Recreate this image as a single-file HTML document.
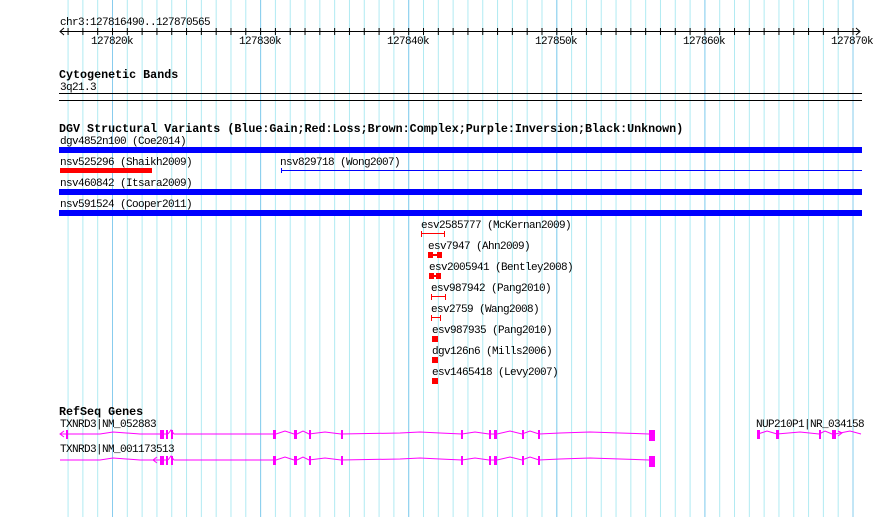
<!DOCTYPE html>
<html><head><meta charset="utf-8"><style>
html,body{margin:0;padding:0;background:#fff;width:890px;height:517px;overflow:hidden}
svg{display:block}
text{font-family:"Liberation Mono",monospace;font-size:11px;letter-spacing:-0.6px;fill:#000}
.b{font-weight:bold;font-size:11.7px;letter-spacing:0}
</style></head><body>
<svg width="890" height="517" viewBox="0 0 890 517" xmlns="http://www.w3.org/2000/svg">
<defs>
<pattern id="g" x="52.76" y="0" width="14.81" height="517" patternUnits="userSpaceOnUse"><rect x="0" y="0" width="1" height="517" fill="#b0eaf2"/></pattern>
<pattern id="G" x="112" y="0" width="148.1" height="517" patternUnits="userSpaceOnUse"><rect x="0" y="0" width="1" height="517" fill="#88ccee"/></pattern>
<pattern id="t" x="52.76" y="0" width="14.81" height="517" patternUnits="userSpaceOnUse"><rect x="0" y="0" width="1" height="517" fill="#000"/></pattern>
</defs>
<rect x="66" y="0" width="788" height="517" fill="url(#g)"/>
<rect x="66" y="0" width="788" height="517" fill="url(#G)"/>
<!-- ruler -->
<text x="60" y="25">chr3:127816490..127870565</text>
<rect x="60" y="31" width="800" height="1" fill="#000"/>
<rect x="66" y="28" width="788" height="7" fill="url(#t)"/>
<path d="M64 28 L60 31.5 L64 35 M856 28 L860 31.5 L856 35" stroke="#000" fill="none" stroke-width="1"/>
<text x="91" y="44">127820k</text>
<text x="239" y="44">127830k</text>
<text x="387" y="44">127840k</text>
<text x="535" y="44">127850k</text>
<text x="683" y="44">127860k</text>
<text x="831" y="44">127870k</text>
<!-- cyto -->
<text class="b" x="59" y="78">Cytogenetic Bands</text>
<text x="60" y="90">3q21.3</text>
<rect x="59" y="93" width="803" height="1" fill="#000"/>
<rect x="59" y="100" width="803" height="1" fill="#000"/>
<!-- DGV -->
<text class="b" x="59" y="132">DGV Structural Variants (Blue:Gain;Red:Loss;Brown:Complex;Purple:Inversion;Black:Unknown)</text>
<text x="60" y="144">dgv4852n100 (Coe2014)</text>
<rect x="59" y="147" width="803" height="6" fill="#0000ff"/>
<text x="60" y="165">nsv525296 (Shaikh2009)</text>
<rect x="60" y="168" width="92" height="5" fill="#ff0000"/>
<text x="280" y="165">nsv829718 (Wong2007)</text>
<rect x="281" y="170" width="581" height="1" fill="#0000ff"/>
<rect x="281" y="168" width="1" height="5" fill="#0000ff"/>
<text x="60" y="186">nsv460842 (Itsara2009)</text>
<rect x="59" y="189" width="803" height="6" fill="#0000ff"/>
<text x="60" y="207">nsv591524 (Cooper2011)</text>
<rect x="59" y="210" width="803" height="6" fill="#0000ff"/>
<text x="421" y="228">esv2585777 (McKernan2009)</text>
<text x="428" y="249">esv7947 (Ahn2009)</text>
<text x="429" y="270">esv2005941 (Bentley2008)</text>
<text x="431" y="291">esv987942 (Pang2010)</text>
<text x="431" y="312">esv2759 (Wang2008)</text>
<text x="432" y="333">esv987935 (Pang2010)</text>
<text x="432" y="354">dgv126n6 (Mills2006)</text>
<text x="432" y="375">esv1465418 (Levy2007)</text>
<g fill="#ff0000">
<rect x="421" y="233" width="24" height="1"/><rect x="421" y="231" width="1" height="6"/><rect x="444" y="231" width="1" height="6"/>
<rect x="428" y="252" width="5" height="6"/><rect x="433" y="254" width="4" height="2"/><rect x="437" y="252" width="5" height="6"/>
<rect x="429" y="273" width="5" height="6"/><rect x="434" y="275" width="2" height="2"/><rect x="436" y="273" width="5" height="6"/>
<rect x="431" y="296" width="15" height="1"/><rect x="431" y="294" width="1" height="6"/><rect x="445" y="294" width="1" height="6"/>
<rect x="431" y="317" width="10" height="1"/><rect x="431" y="315" width="1" height="6"/><rect x="440" y="315" width="1" height="6"/>
<rect x="432" y="336" width="6" height="6"/>
<rect x="432" y="357" width="6" height="6"/>
<rect x="432" y="378" width="6" height="6"/>
</g>
<!-- genes -->
<text class="b" x="59" y="415">RefSeq Genes</text>
<text x="60" y="427">TXNRD3|NM_052883</text>
<text x="60" y="452">TXNRD3|NM_001173513</text>
<text x="756" y="427">NUP210P1|NR_034158</text>
<g fill="none" stroke="#ff00ff" stroke-width="1">
<path d="M60 434 L67 434 M64 431 L60 434 L64 437 M67 434 L100 434 L113 432 L140 434 L160 434 M164 434 L166 434 M168 434 L171 430 L174 434 L250 434 L273 434 M276 434 L285 431 L294 434 M297 434 L303 431 L309 434 L325 432 L341 434 L400 433 L420 432 L440 433 L462 434 L475 432 L489 434 M491 434 L495 434 M497 434 L510 431 L522 434 L530 431 L539 434 L560 433 L590 432 L620 433 L649 434"/>
<path d="M60 460 L100 460 L113 458 L140 460 L160 460 M157 457 L153 460 L157 463 M164 460 L166 460 M168 460 L171 456 L174 460 L250 460 L273 460 M276 460 L285 457 L294 460 M297 460 L303 457 L309 460 L325 458 L341 460 L400 459 L420 458 L440 459 L462 460 L475 458 L489 460 M491 460 L495 460 M497 460 L510 457 L522 460 L530 457 L539 460 L560 459 L590 458 L620 459 L649 460"/>
<path d="M758 434 L767 431 L777 434 L800 432 L819 434 L825 431 L832 434 M835 434 L850 431 L861 434 M838 431 L842 433 L838 436"/>
</g>
<g fill="#ff00ff">
<rect x="66" y="430" width="2" height="9"/><rect x="160" y="430" width="4" height="9"/><rect x="166" y="430" width="2" height="9"/><rect x="171" y="430" width="2" height="9"/>
<rect x="273" y="430" width="3" height="9"/><rect x="294" y="430" width="3" height="9"/><rect x="309" y="430" width="2" height="9"/><rect x="341" y="430" width="2" height="9"/>
<rect x="461" y="430" width="2" height="9"/><rect x="489" y="430" width="2" height="9"/><rect x="494" y="430" width="3" height="9"/><rect x="522" y="430" width="2" height="9"/><rect x="538" y="430" width="2" height="9"/><rect x="649" y="430" width="6" height="11"/>
<rect x="160" y="456" width="4" height="9"/><rect x="166" y="456" width="2" height="9"/><rect x="171" y="456" width="2" height="9"/>
<rect x="273" y="456" width="3" height="9"/><rect x="294" y="456" width="3" height="9"/><rect x="309" y="456" width="2" height="9"/><rect x="341" y="456" width="2" height="9"/>
<rect x="461" y="456" width="2" height="9"/><rect x="489" y="456" width="2" height="9"/><rect x="494" y="456" width="3" height="9"/><rect x="522" y="456" width="2" height="9"/><rect x="538" y="456" width="2" height="9"/><rect x="649" y="456" width="6" height="11"/>
<rect x="757" y="430" width="3" height="9"/><rect x="776" y="430" width="3" height="9"/><rect x="819" y="430" width="2" height="9"/><rect x="832" y="430" width="4" height="9"/>
</g>
</svg>
</body></html>
